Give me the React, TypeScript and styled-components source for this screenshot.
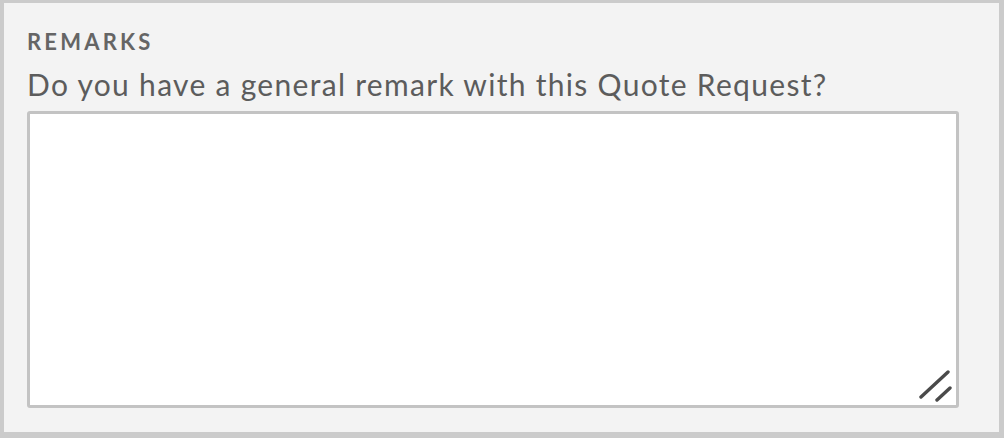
import React from 'react'
import styled, { createGlobalStyle } from 'styled-components'

const GlobalStyle = createGlobalStyle`
  html, body {
    margin: 0;
    padding: 0;
    background: #f3f3f3;
  }
  * {
    box-sizing: border-box;
  }
`

const Panel = styled.section`
  width: 1004px;
  height: 438px;
  border-style: solid;
  border-color: #cbcbcb;
  border-width: 3px 5px 6px 4px;
  background: #f3f3f3;
  padding: 26px 40px 0 23px;
  font-family: Lato, 'Noto Sans', sans-serif;
`

const Title = styled.h3`
  margin: 0;
  font-size: 22px;
  line-height: 26px;
  font-weight: 700;
  letter-spacing: 3.2px;
  color: #656565;
`

const Question = styled.label`
  display: block;
  margin: 12px 0 10px;
  font-size: 30px;
  line-height: 34px;
  font-weight: 400;
  letter-spacing: 1.3px;
  color: #5c5c5c;
  white-space: nowrap;
`

const Field = styled.div`
  position: relative;
  width: 932px;
  height: 297px;
`

const Area = styled.textarea`
  display: block;
  width: 100%;
  height: 100%;
  border: 3px solid #c3c3c3;
  border-radius: 3px;
  background: #ffffff;
  resize: none;
  outline: none;
  font-family: inherit;
  font-size: 20px;
`

const Grip = styled.svg`
  position: absolute;
  right: 6px;
  bottom: 6px;
  width: 36px;
  height: 36px;
  pointer-events: none;
`

export default function App() {
  return (
    <>
      <GlobalStyle />
      <Panel>
        <Title>REMARKS</Title>
        <Question htmlFor="remarks">
          Do you have a general remark with this Quote Request?
        </Question>
        <Field>
          <Area id="remarks" />
          <Grip viewBox="0 0 36 36">
            <path
              d="M31 6 L4 31 M33 22 L20 34"
              stroke="#4a4a4a"
              strokeWidth="3.4"
              strokeLinecap="round"
              fill="none"
            />
          </Grip>
        </Field>
      </Panel>
    </>
  )
}
